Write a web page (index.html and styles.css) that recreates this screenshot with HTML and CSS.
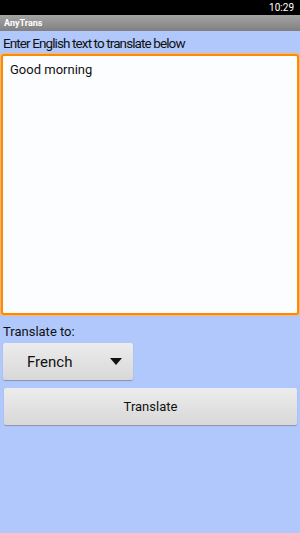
FILE: index.html
```html
<!DOCTYPE html>
<html lang="en">
<head>
  <meta charset="UTF-8" />
  <meta name="viewport" content="width=device-width, initial-scale=1.0"/>
  <title>AnyTrans</title>
  <link rel="stylesheet" href="styles.css">
</head>
<body>

  <div class="status">10:29</div>
  <div class="titlebar">AnyTrans</div>

  <div class="screen">
    <div class="label first">Enter English text to translate below</div>
    <div class="input">Good morning</div>

    <div class="label to">Translate to:</div>
    <div class="spinner">
      <span>French</span>
      <svg class="arrow" width="12" height="7" viewBox="0 0 12 7"><polygon points="0,0 12,0 6,7" fill="#111"/></svg>
    </div>
    <div class="btn">Translate</div>
  </div>

</body>
</html>
```

FILE: styles.css
```css
body {
  margin: 0;
  font-family: Roboto, 'Noto Sans', sans-serif;
  background: #b0c8fc;
  height: 533px;
  overflow: hidden;
}

.status {
  background: #000;
  color: #fff;
  height: 15px;
  font-size: 10px;
  line-height: 15px;
  text-align: right;
  padding-right: 6px;
}

.titlebar {
  background: linear-gradient(#a4a4a4, #808080);
  color: #fff;
  height: 16px;
  line-height: 16px;
  font-size: 9px;
  font-weight: bold;
  padding-left: 4px;
}

.screen {
  padding: 0 1px;
}

.label {
  font-size: 13px;
  color: #111;
  padding: 3px 2px 0;
  box-sizing: border-box;
  height: 23px;
}

.label.first {
  font-size: 13.5px;
  letter-spacing: -0.9px;
  padding-top: 4px;
}

.input {
  height: 245px;
  border: 2px solid #ff8a00;
  border-radius: 3px;
  background: #fcfdff;
  box-shadow: 0 0 1px 1px #ffb766;
  padding: 6px 7px;
  font-size: 13px;
  color: #111;
}

.label.to {
  margin-top: 9px;
  padding-top: 0;
  height: 19px;
}

.spinner {
  margin-left: 2px;
  width: 130px;
  height: 37px;
  box-sizing: border-box;
  background: linear-gradient(#ececec, #d8d8d8);
  border-radius: 2px;
  box-shadow: 0 1px 1px #8a93a8;
  display: flex;
  align-items: center;
  padding: 0 11px 0 24px;
  justify-content: space-between;
  font-size: 15px;
  color: #111;
}

.btn {
  margin: 8px 2px 0 3px;
  height: 37px;
  background: linear-gradient(#ececec, #d8d8d8);
  border-radius: 2px;
  box-shadow: 0 1px 1px #8a93a8;
  display: flex;
  align-items: center;
  justify-content: center;
  font-size: 13px;
  color: #111;
}
```
